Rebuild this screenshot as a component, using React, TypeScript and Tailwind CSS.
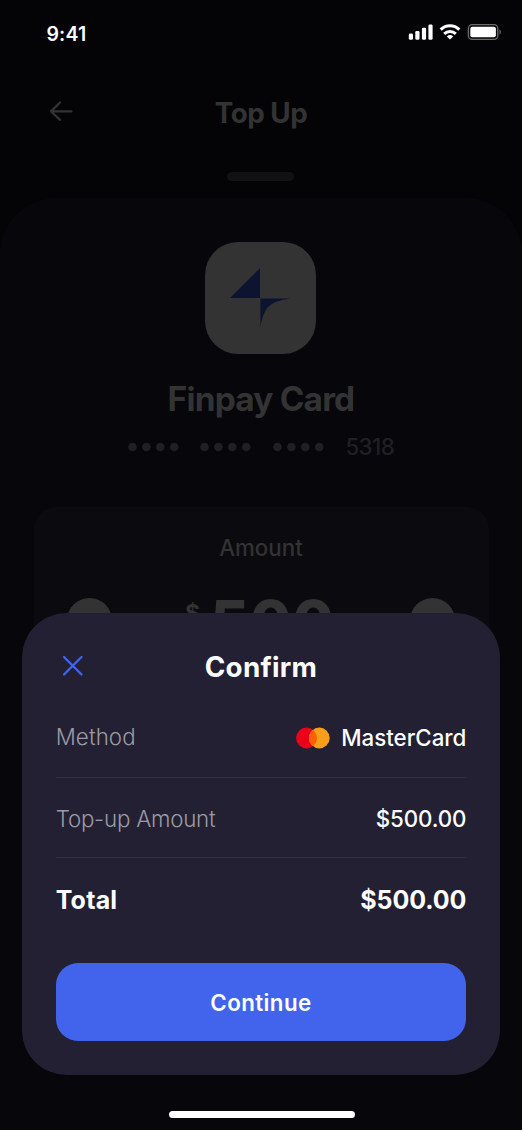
import type { ReactNode } from "react";

function StatusBar() {
  return (
    <header className="flex h-[68px] shrink-0 items-start justify-between pl-[46.5px] pr-[20px] pt-[22px] text-white">
      <span className="text-[19.5px] font-semibold leading-6 tracking-[0.15px]">9:41</span>
      <svg className="mt-[1px]" width="94" height="20" viewBox="408 23 94 20" fill="none">
        <g fill="white">
          <rect x="408.8" y="33.6" width="4.2" height="6.2" rx="1.4" />
          <rect x="415.3" y="30.9" width="4.2" height="8.9" rx="1.4" />
          <rect x="421.9" y="27.7" width="4.2" height="12.1" rx="1.4" />
          <rect x="428.4" y="24.4" width="4.2" height="15.4" rx="1.4" />
        </g>
        <path d="M440.7 29.6a13.3 13.3 0 0 1 18.6 0" stroke="white" strokeWidth="3.1" />
        <path d="M444.2 33.9a8.3 8.3 0 0 1 11.6 0" stroke="white" strokeWidth="2.9" />
        <path d="m450 39.6-3.2-3.1a4.8 4.8 0 0 1 6.4 0z" fill="white" />
        <rect x="468.4" y="24.6" width="29.4" height="14.8" rx="3.6" stroke="#6c6c6e" strokeWidth="1.3" />
        <rect x="470.3" y="26.7" width="25.6" height="10.6" rx="2" fill="white" />
        <path d="M499.5 29.6v5a2.9 2.9 0 0 0 0-5z" fill="#6c6c6e" />
      </svg>
    </header>
  );
}

function DotGroup() {
  return (
    <svg width="51" height="10" viewBox="0 0 51 10" fill="#202023">
      {[4.5, 18.4, 32.3, 46.2].map((cx) => (
        <circle key={cx} cx={cx} cy="5" r="4.3" />
      ))}
    </svg>
  );
}

function Row({ label, children, className }: { label: string; children: ReactNode; className: string }) {
  return (
    <div className={className}>
      <span>{label}</span>
      {children}
    </div>
  );
}

function ConfirmSheet() {
  return (
    <section className="absolute left-[22.3px] top-[612.5px] flex h-[462px] w-[477.4px] flex-col rounded-[44.5px] bg-[#222032] px-[33.4px] text-white">
      <div className="mt-[36px] grid h-[36px] grid-cols-[60px_1fr_60px] items-center">
        <svg className="mb-[2px] ml-[5px]" width="24" height="24" viewBox="0 0 24 24" fill="none" stroke="#4264ed" strokeWidth="2.3" strokeLinecap="round">
          <path d="m3 3 17.5 17.5M20.500 3 3 20.500" />
        </svg>
        <h2 className="text-center text-[27.8px] font-bold leading-9 tracking-[0.25px]">Confirm</h2>
      </div>
      <Row label="Method" className="flex h-[93px] items-center justify-between border-b-[1.4px] border-[#302f40] pt-[13px] text-[22.3px] font-light tracking-[0.1px] text-[#9c9ba4]">
        <span className="flex items-center gap-[11px] pt-[2px] font-[450] text-white">
          <svg width="34" height="22" viewBox="0 0 34 22">
            <circle cx="10.500" cy="11" r="10.400" fill="#eb001b" />
            <circle cx="23.300" cy="11" r="10.400" fill="#f79e1b" />
            <path d="M16.900 2.800a10.400 10.400 0 0 1 0 16.400 10.400 10.400 0 0 1 0-16.400z" fill="#ff5f00" />
          </svg>
          <span className="tracking-[0px]">MasterCard</span>
        </span>
      </Row>
      <Row label="Top-up Amount" className="flex h-[80.500px] items-center justify-between border-b-[1.4px] border-[#302f40] pt-[3px] text-[22.3px] font-light tracking-[-0.22px] text-[#9c9ba4]">
        <span className="font-[450] tracking-[-0.1px] text-white">$500.00</span>
      </Row>
      <Row label="Total" className="flex h-[84px] items-center justify-between pt-[2px] text-[25px] font-bold tracking-[0.2px]">
        <span className="tracking-[-0.1px]">$500.00</span>
      </Row>
      <button className="mt-[21px] h-[78px] w-full rounded-[22px] bg-[#4264ed] pt-[2px] text-[22.3px] font-semibold tracking-[0.45px]">
        Continue
      </button>
    </section>
  );
}

export default function App() {
  return (
    <div className="h-[1131px] w-[523px] overflow-hidden bg-white font-['Inter',sans-serif]">
      <main className="relative flex h-[1130px] w-[522px] flex-col overflow-hidden bg-[#040406] text-[#333333]">
        <StatusBar />
        <nav className="grid h-[104px] shrink-0 grid-cols-[88px_1fr_88px] pt-[27px]">
          <svg className="ml-[48px] mt-[4px]" width="26" height="24" viewBox="0 0 26 24" fill="none" stroke="#333333" strokeWidth="2.2" strokeLinecap="round" strokeLinejoin="round">
            <path d="M23.400 12.400H3M12 3.500l-9 8.900 9 8.500" />
          </svg>
          <h1 className="text-center text-[27.8px] font-bold leading-9 tracking-[-0.5px]">Top Up</h1>
        </nav>
        <div className="ml-[227px] h-[9px] w-[67px] shrink-0 rounded-full bg-[#111113]" />
        <section className="mt-[17px] flex flex-1 flex-col items-center rounded-t-[56px] bg-[#06060b] pt-[44px]">
          <div className="mr-[1.5px] flex size-[111.500px] items-center justify-center rounded-[33px] bg-[#333333]">
            <svg width="60" height="60" viewBox="0 0 60 60" fill="#0d1430">
              <path d="M30 0v30H0zM30.400 30.500H60C41 34 34 37 30.400 60z" />
            </svg>
          </div>
          <h2 className="mt-[23px] text-[33.400px] font-bold leading-[44px] tracking-[-0.8px]">Finpay Card</h2>
          <div className="mt-[11.500px] flex h-[30px] items-center text-[22.3px] leading-[30px] text-[#202023]">
            <span className="flex gap-[21.500px]"><DotGroup /><DotGroup /><DotGroup /></span>
            <span className="ml-[21.500px] font-medium tracking-[-0.6px]">5318</span>
          </div>
          <div className="mt-[45px] flex h-[180px] w-[455px] flex-col rounded-[22px] bg-[#0a0a0f]">
            <p className="mt-[26px] text-center text-[22.3px] font-medium leading-[30px]">Amount</p>
            <div className="mt-[35px] flex items-start justify-between px-[33px]">
              <span className="size-[45px] rounded-full bg-[#333333]" />
              <div className="flex items-start pr-[2px] font-extrabold">
                <span className="mr-[10px] mt-[3px] text-[23px] font-bold leading-[24px]">$</span>
                <span className="mt-[2px] text-[60px] leading-[44px] tracking-[1px]">500</span>
              </div>
              <span className="size-[45px] rounded-full bg-[#333333]" />
            </div>
          </div>
        </section>
        <ConfirmSheet />
        <div className="absolute bottom-[12.500px] left-[168.500px] h-[6.800px] w-[186.500px] rounded-full bg-white" />
      </main>
    </div>
  );
}
